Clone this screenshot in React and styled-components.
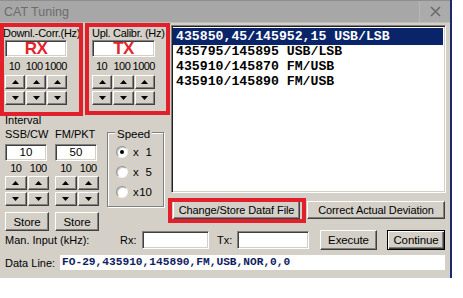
import React from "react";
import styled, { createGlobalStyle } from "styled-components";

const Global = createGlobalStyle`
  html, body { margin: 0; padding: 0; background: #ffffff; }
  body { font-family: "Liberation Sans", Arial, sans-serif; }
  * { box-sizing: border-box; }
`;

const Window = styled.div`
  width: 452px;
  height: 278px;
  background: #d4d0c8;
  border-right: 2px solid #1c2a6a;
  display: flex;
  flex-direction: column;
  font-family: "Liberation Sans", Arial, sans-serif;
  font-size: 11px;
  color: #000;
  overflow: hidden;
`;

const TitleBar = styled.div`
  height: 23px;
  flex: none;
  display: flex;
  align-items: center;
  background: #a7a7a7;
  border-top: 1px solid #8e8e8e;
  border-bottom: 1px solid #bdbdbd;
`;

const TitleText = styled.div`
  flex: 1;
  padding-left: 4px;
  font-size: 12.5px;
  color: #6c6c6c;
`;

const CloseBox = styled.div`
  width: 31px;
  height: 100%;
  display: flex;
  align-items: center;
  justify-content: center;
  background: #ababab;
  border-left: 1px solid #b6b6b6;
`;

const Content = styled.div`
  flex: 1;
  display: flex;
  flex-direction: column;
  padding: 3px 4px 0 5px;
`;

const TopArea = styled.div`
  display: flex;
  gap: 6px;
`;

const LeftCol = styled.div`
  width: 160px;
  flex: none;
  display: flex;
  flex-direction: column;
`;

const RightCol = styled.div`
  flex: 1;
  display: flex;
  flex-direction: column;
`;

const GroupsRow = styled.div`
  display: flex;
  gap: 25px;
`;

const SpinGroup = styled.div`
  position: relative;
  width: ${(p) => p.$w}px;
  display: flex;
  flex-direction: column;
`;

const RedFrame = styled.div`
  position: absolute;
  left: ${(p) => p.$l}px;
  top: ${(p) => p.$t}px;
  right: ${(p) => p.$r}px;
  bottom: ${(p) => p.$b}px;
  border: 4px solid #e2202b;
  pointer-events: none;
`;

const Label = styled.div`
  line-height: 14px;
  height: 14px;
  white-space: nowrap;
  margin-top: ${(p) => p.$mt || 0}px;
  margin-left: ${(p) => p.$ml || 0}px;
  letter-spacing: ${(p) => (p.$tight ? "-0.3px" : "0")};
`;

const Field = styled.div`
  width: ${(p) => (p.$w ? `${p.$w}px` : "100%")};
  height: ${(p) => p.$h || 17}px;
  margin-top: ${(p) => p.$mt || 0}px;
  background: #fff;
  border: 1px solid;
  border-color: #808080 #ffffff #ffffff #808080;
  box-shadow: inset 1px 1px 0 #404040, inset -1px -1px 0 #d4d0c8;
  display: flex;
  align-items: center;
  justify-content: center;
  font-size: 11.5px;
  line-height: 1;
  flex: none;
`;

const BigRed = styled.span`
  color: #e3242b;
  font-weight: bold;
  font-size: 17px;
  letter-spacing: -0.5px;
`;

const NumRow = styled.div`
  display: grid;
  grid-template-columns: repeat(${(p) => p.$n}, 1fr);
  column-gap: 1px;
  height: ${(p) => p.$h || 14}px;
  line-height: ${(p) => p.$h || 14}px;
  margin-top: ${(p) => p.$mt || 0}px;
  font-size: 11px;
  letter-spacing: -0.5px;
  text-align: center;
  white-space: nowrap;
`;

const SpinGrid = styled.div`
  display: grid;
  grid-template-columns: repeat(${(p) => p.$n}, 1fr);
  column-gap: 1px;
  row-gap: 2px;
  margin-top: ${(p) => p.$mt || 0}px;
`;

const SpinButton = styled.div`
  height: 14px;
  background: #d4d0c8;
  border: 1px solid;
  border-color: #ffffff #404040 #404040 #ffffff;
  box-shadow: inset -1px -1px 0 #808080;
  display: flex;
  align-items: center;
  justify-content: center;
`;

const PushButton = styled.div`
  width: ${(p) => p.$w}px;
  height: ${(p) => p.$h || 18}px;
  margin-top: ${(p) => p.$mt || 0}px;
  margin-left: ${(p) => p.$ml || 0}px;
  flex: none;
  position: relative;
  background: #d4d0c8;
  border: 1px solid;
  border-color: ${(p) => (p.$def ? "#000" : "#ffffff #404040 #404040 #ffffff")};
  box-shadow: ${(p) =>
    p.$def
      ? "inset 1px 1px 0 #ffffff, inset -1px -1px 0 #404040, inset -2px -2px 0 #808080"
      : "inset -1px -1px 0 #808080"};
  display: flex;
  align-items: center;
  justify-content: center;
  font-size: ${(p) => p.$fs || 11}px;
  white-space: nowrap;
  letter-spacing: -0.1px;
`;

const BottomRow = styled.div`
  display: flex;
  align-items: flex-start;
`;

const IntervalCol = styled.div`
  width: 44px;
  margin-right: ${(p) => p.$mr || 0}px;
  display: flex;
  flex-direction: column;
`;

const GroupBox = styled.div`
  position: relative;
  width: 57px;
  height: 75px;
  margin-top: 5px;
  margin-left: 2px;
  border: 1px solid #808080;
  box-shadow: inset 1px 1px 0 #ffffff, 1px 1px 0 #ffffff;
  padding: 9px 0 0 8px;
  display: flex;
  flex-direction: column;
`;

const Legend = styled.span`
  position: absolute;
  top: -5px;
  left: 7px;
  padding: 0 2px;
  background: #d4d0c8;
  font-size: 11.5px;
  line-height: 13px;
`;

const RadioRow = styled.div`
  height: 20px;
  display: flex;
  align-items: center;
  gap: 5px;
`;

const RadioCircle = styled.span`
  width: 12px;
  height: 12px;
  border-radius: 50%;
  background: #fff;
  border: 1px solid;
  border-color: #909090 #f4f4f4 #f4f4f4 #909090;
  box-shadow: inset 1px 1px 0 #c8c8c8;
  display: flex;
  align-items: center;
  justify-content: center;
  flex: none;

  &::after {
    content: "";
    width: 4px;
    height: 4px;
    border-radius: 50%;
    background: ${(p) => (p.$on ? "#000" : "transparent")};
  }
`;

const RadioText = styled.span`
  width: 19px;
  display: flex;
  justify-content: space-between;
  font-size: 11.5px;
`;

const ListBox = styled.div`
  height: 168px;
  margin-top: -1px;
  background: #fff;
  border: 1px solid;
  border-color: #808080 #ffffff #ffffff #808080;
  box-shadow: inset 1px 1px 0 #202020, inset -1px -1px 0 #d4d0c8;
  padding: 3px 2px 0 1px;
  display: flex;
  flex-direction: column;
`;

const ListItem = styled.div`
  height: 15px;
  line-height: 15px;
  padding-left: 3px;
  font-family: "Liberation Mono", "Courier New", monospace;
  font-weight: bold;
  font-size: 13.2px;
  white-space: nowrap;
  color: ${(p) => (p.$sel ? "#ffffff" : "#000000")};
  background: ${(p) => (p.$sel ? "#0a246a" : "transparent")};
  box-shadow: ${(p) => (p.$sel ? "0 1px 0 #0a246a, 0 -1px 0 #0a246a" : "none")};
`;

const ButtonRow = styled.div`
  display: flex;
  gap: 7px;
  margin-top: 8px;
  padding-left: 2px;
`;

const ManRow = styled.div`
  display: flex;
  align-items: center;
  height: 20px;
  margin-top: -1px;
`;

const RowLabel = styled.span`
  width: ${(p) => p.$w}px;
  flex: none;
  white-space: nowrap;
  font-size: 11px;
`;

const DataRow = styled.div`
  display: flex;
  align-items: center;
  height: 15px;
  margin-top: 5px;
`;

const DataValue = styled.div`
  flex: 1;
  height: 15px;
  margin-right: 1px;
  background: #fff;
  padding-left: 2px;
  font-family: "Liberation Mono", "Courier New", monospace;
  font-weight: bold;
  font-size: 11.2px;
  line-height: 15px;
  color: #101c62;
  white-space: nowrap;
`;

const Spacer = styled.span`
  width: ${(p) => p.$w}px;
  flex: none;
`;

const Arrow = ({ up }) => (
  <svg width="7" height="4" viewBox="0 0 7 4">
    {up ? <polygon points="3.5,0 7,4 0,4" fill="#000" /> : <polygon points="0,0 7,0 3.5,4" fill="#000" />}
  </svg>
);

const CloseIcon = () => (
  <svg width="11" height="11" viewBox="0 0 11 11">
    <path d="M1 1 L10 10 M10 1 L1 10" stroke="#6a6a6a" strokeWidth="1.6" />
  </svg>
);

const Spins = ({ n, mt }) => (
  <SpinGrid $n={n} $mt={mt}>
    {Array.from({ length: n }).map((_, i) => (
      <SpinButton key={`u${i}`}>
        <Arrow up />
      </SpinButton>
    ))}
    {Array.from({ length: n }).map((_, i) => (
      <SpinButton key={`d${i}`}>
        <Arrow />
      </SpinButton>
    ))}
  </SpinGrid>
);

const listItems = [
  "435850,45/145952,15 USB/LSB",
  "435795/145895 USB/LSB",
  "435910/145870 FM/USB",
  "435910/145890 FM/USB",
];

export default function App() {
  return (
    <>
      <Global />
      <Window>
        <TitleBar>
          <TitleText>CAT Tuning</TitleText>
          <CloseBox>
            <CloseIcon />
          </CloseBox>
        </TitleBar>
        <Content>
          <TopArea>
            <LeftCol>
              <GroupsRow>
                <SpinGroup $w={62}>
                  <Label $ml={-2} $tight>Downl.-Corr.(Hz)</Label>
                  <Field>
                    <BigRed>RX</BigRed>
                  </Field>
                  <NumRow $n={3} $mt={2}>
                    <span>10</span>
                    <span>100</span>
                    <span>1000</span>
                  </NumRow>
                  <Spins n={3} mt={2} />
                  <RedFrame $l={-5} $t={-3} $r={-16} $b={-11} />
                </SpinGroup>
                <SpinGroup $w={63}>
                  <Label $tight>Upl. Calibr. (Hz)</Label>
                  <Field>
                    <BigRed>TX</BigRed>
                  </Field>
                  <NumRow $n={3} $mt={2}>
                    <span>10</span>
                    <span>100</span>
                    <span>1000</span>
                  </NumRow>
                  <Spins n={3} mt={2} />
                  <RedFrame $l={-7} $t={-3} $r={-15} $b={-10} />
                </SpinGroup>
              </GroupsRow>
              <Label $mt={8}>Interval</Label>
              <BottomRow>
                <IntervalCol $mr={6}>
                  <Label>SSB/CW</Label>
                  <Field $w={42} $mt={3}>10</Field>
                  <NumRow $n={2} $h={13} $mt={1}>
                    <span>10</span>
                    <span>100</span>
                  </NumRow>
                  <Spins n={2} mt={1} />
                  <PushButton $w={44} $h={19} $mt={6} $fs={11.5}>Store</PushButton>
                </IntervalCol>
                <IntervalCol $mr={6}>
                  <Label>FM/PKT</Label>
                  <Field $w={42} $mt={3}>50</Field>
                  <NumRow $n={2} $h={13} $mt={1}>
                    <span>10</span>
                    <span>100</span>
                  </NumRow>
                  <Spins n={2} mt={1} />
                  <PushButton $w={44} $h={19} $mt={6} $fs={11.5}>Store</PushButton>
                </IntervalCol>
                <GroupBox>
                  <Legend>Speed</Legend>
                  <RadioRow>
                    <RadioCircle $on />
                    <RadioText>
                      <span>x</span>
                      <span>1</span>
                    </RadioText>
                  </RadioRow>
                  <RadioRow>
                    <RadioCircle />
                    <RadioText>
                      <span>x</span>
                      <span>5</span>
                    </RadioText>
                  </RadioRow>
                  <RadioRow>
                    <RadioCircle />
                    <RadioText>
                      <span>x</span>
                      <span>10</span>
                    </RadioText>
                  </RadioRow>
                </GroupBox>
              </BottomRow>
            </LeftCol>
            <RightCol>
              <ListBox>
                {listItems.map((t, i) => (
                  <ListItem key={t} $sel={i === 0}>
                    {t}
                  </ListItem>
                ))}
              </ListBox>
              <ButtonRow>
                <PushButton $w={127}>
                  Change/Store Dataf File
                  <RedFrame $l={-6} $t={-4} $r={-7} $b={-5} />
                </PushButton>
                <PushButton $w={138}>Correct Actual Deviation</PushButton>
              </ButtonRow>
            </RightCol>
          </TopArea>
          <ManRow>
            <RowLabel $w={115}>Man. Input (kHz):</RowLabel>
            <RowLabel $w={22}>Rx:</RowLabel>
            <Field $w={67} $h={18} />
            <Spacer $w={8} />
            <RowLabel $w={20}>Tx:</RowLabel>
            <Field $w={72} $h={18} />
            <PushButton $w={57} $h={20} $ml={11} $fs={11.5}>Execute</PushButton>
            <PushButton $w={58} $h={20} $ml={10} $fs={11.5} $def>Continue</PushButton>
          </ManRow>
          <DataRow>
            <RowLabel $w={55}>Data Line:</RowLabel>
            <DataValue>FO-29,435910,145890,FM,USB,NOR,0,0</DataValue>
          </DataRow>
        </Content>
      </Window>
    </>
  );
}
